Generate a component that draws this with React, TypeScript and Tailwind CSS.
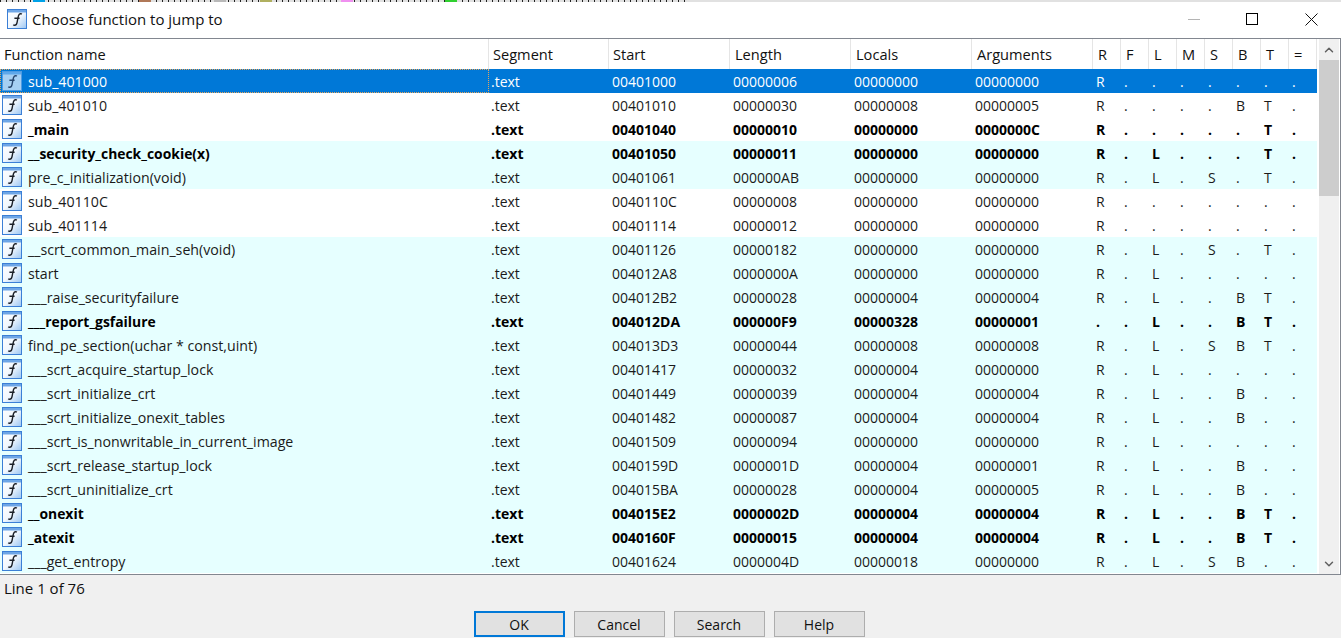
import React from "react";
import { ChevronDown, ChevronUp } from "lucide-react";

interface FuncRow {
  name: string;
  start: string;
  length: string;
  locals: string;
  args: string;
  flags: string;
  bold?: boolean;
  plain?: boolean;
}

const ZERO = "00000000";

const rows: FuncRow[] = [
  { name: "sub_401000", start: "00401000", length: "00000006", locals: ZERO, args: ZERO, flags: "R.......", plain: true },
  { name: "sub_401010", start: "00401010", length: "00000030", locals: "00000008", args: "00000005", flags: "R....BT.", plain: true },
  { name: "_main", start: "00401040", length: "00000010", locals: ZERO, args: "0000000C", flags: "R.....T.", bold: true, plain: true },
  { name: "__security_check_cookie(x)", start: "00401050", length: "00000011", locals: ZERO, args: ZERO, flags: "R.L...T.", bold: true },
  { name: "pre_c_initialization(void)", start: "00401061", length: "000000AB", locals: ZERO, args: ZERO, flags: "R.L.S.T." },
  { name: "sub_40110C", start: "0040110C", length: "00000008", locals: ZERO, args: ZERO, flags: "R.......", plain: true },
  { name: "sub_401114", start: "00401114", length: "00000012", locals: ZERO, args: ZERO, flags: "R.......", plain: true },
  { name: "__scrt_common_main_seh(void)", start: "00401126", length: "00000182", locals: ZERO, args: ZERO, flags: "R.L.S.T." },
  { name: "start", start: "004012A8", length: "0000000A", locals: ZERO, args: ZERO, flags: "R.L....." },
  { name: "___raise_securityfailure", start: "004012B2", length: "00000028", locals: "00000004", args: "00000004", flags: "R.L..BT." },
  { name: "___report_gsfailure", start: "004012DA", length: "000000F9", locals: "00000328", args: "00000001", flags: "..L..BT.", bold: true },
  { name: "find_pe_section(uchar * const,uint)", start: "004013D3", length: "00000044", locals: "00000008", args: "00000008", flags: "R.L.SBT." },
  { name: "___scrt_acquire_startup_lock", start: "00401417", length: "00000032", locals: "00000004", args: ZERO, flags: "R.L....." },
  { name: "___scrt_initialize_crt", start: "00401449", length: "00000039", locals: "00000004", args: "00000004", flags: "R.L..B.." },
  { name: "___scrt_initialize_onexit_tables", start: "00401482", length: "00000087", locals: "00000004", args: "00000004", flags: "R.L..B.." },
  { name: "___scrt_is_nonwritable_in_current_image", start: "00401509", length: "00000094", locals: ZERO, args: ZERO, flags: "R.L....." },
  { name: "___scrt_release_startup_lock", start: "0040159D", length: "0000001D", locals: "00000004", args: "00000001", flags: "R.L..B.." },
  { name: "___scrt_uninitialize_crt", start: "004015BA", length: "00000028", locals: "00000004", args: "00000005", flags: "R.L..B.." },
  { name: "__onexit", start: "004015E2", length: "0000002D", locals: "00000004", args: "00000004", flags: "R.L..BT.", bold: true },
  { name: "_atexit", start: "0040160F", length: "00000015", locals: "00000004", args: "00000004", flags: "R.L..BT.", bold: true },
  { name: "___get_entropy", start: "00401624", length: "0000004D", locals: "00000018", args: ZERO, flags: "R.L.SB.." },
];

const columns = ["Function name", "Segment", "Start", "Length", "Locals", "Arguments", "R", "F", "L", "M", "S", "B", "T", "="];

const GRID = "grid grid-cols-[489px_120px_121px_121px_121px_121px_repeat(8,28px)]";

function FunctionIcon({ selected }: { selected?: boolean }) {
  return (
    <svg width="20" height="20" viewBox="0 0 20 20" className="shrink-0">
      <defs>
        <linearGradient id="icon-fill" x1="0" y1="0" x2="1" y2="1">
          <stop offset="0" stopColor="#ffffff" />
          <stop offset="0.5" stopColor="#f2f8fe" />
          <stop offset="1" stopColor="#9cc6f2" />
        </linearGradient>
      </defs>
      <rect x="0.5" y="0.5" width="19" height="19" fill={selected ? "#a6d0f3" : "url(#icon-fill)"} stroke={selected ? "#4f9ce2" : "#3b7fd6"} />
      <rect x="1" y="1" width="18" height="2.5" fill={selected ? "#5ea8ea" : "#6ea6e6"} />
      <path
        d="M14.8 5.2c-.6-.7-1.8-.6-2.5.1-.8.8-1.1 2.2-1.4 3.8l-.8 4.2c-.3 1.6-.9 3-2.5 3-.6 0-1-.2-1.3-.5M7.4 9.2h5.2"
        fill="none"
        stroke={selected ? "#26466e" : "#1c2028"}
        strokeWidth="1.4"
      />
    </svg>
  );
}

function TopStrip() {
  return (
    <div className="flex h-[2px] bg-[#e1e1e1]">
      <div className="w-[690px] h-full bg-[repeating-linear-gradient(90deg,#222222_0,#222222_1px,#e1e1e1_1px,#e1e1e1_6px)] flex">
        <div className="ml-[33px] w-[12px] bg-[#00a2e8]" />
        <div className="ml-[94px] w-[12px] bg-[#b07858]" />
        <div className="ml-[63px] w-[12px] bg-[#b9b9b9]" />
        <div className="ml-[34px] w-[12px] bg-[#b0b060]" />
        <div className="ml-[69px] w-[12px] bg-[#f090f0]" />
        <div className="ml-[92px] w-[12px] bg-[#30d030]" />
      </div>
    </div>
  );
}

function TitleBar() {
  return (
    <div className="flex h-[36px] items-center bg-white pb-[2px] pl-[7px]">
      <FunctionIcon />
      <span className="ml-[5px] text-[15px] text-[#111111]">Choose function to jump to</span>
      <div className="ml-auto flex items-center">
        <div className="h-px w-[12px] bg-[#b4b4b4]" />
        <div className="ml-[46px] size-[12px] border border-black" />
        <svg width="13" height="13" viewBox="0 0 13 13" className="ml-[47px] mr-[23px]">
          <path d="M0.5 0.5l12 12M12.5 0.5l-12 12" stroke="#111111" strokeWidth="1" fill="none" />
        </svg>
      </div>
    </div>
  );
}

function TableHeader() {
  return (
    <div className={`${GRID} h-[30px] text-[14.6px]`}>
      {columns.map((c, i) => (
        <div key={c} className={`flex items-center border-r border-[#e5e5e5] pt-[2px] text-[#111111] ${i === 0 || i === 1 || i === 2 ? "pl-[4px]" : "pl-[5px]"}`}>
          {c}
        </div>
      ))}
    </div>
  );
}

function TableRow({ row, selected }: { row: FuncRow; selected: boolean }) {
  const bg = selected ? "bg-[#0078d7] text-white" : row.plain ? "bg-white text-[#1a1a1a]" : "bg-[#e6ffff] text-[#1a1a1a]";
  return (
    <div className={`${GRID} h-[24px] ${bg} ${row.bold ? "font-bold text-black" : ""}`}>
      <div className={`flex items-center pl-[2px] ${selected ? "outline-1 -outline-offset-1 outline-dotted outline-[#e6a65c]" : ""}`}>
        <FunctionIcon selected={selected} />
        <span className={`ml-[6px] pt-[2px] ${row.bold ? "text-[13.9px]" : "text-[14.2px]"}`}>{row.name}</span>
      </div>
      <div className="flex items-center pl-[2px]">.text</div>
      <div className="flex items-center pl-[3px]">{row.start}</div>
      <div className="flex items-center pl-[3px]">{row.length}</div>
      <div className="flex items-center pl-[3px]">{row.locals}</div>
      <div className="flex items-center pl-[3px]">{row.args}</div>
      {row.flags.split("").map((f, i) => (
        <div key={i} className="flex items-center pl-[3px]">
          {f}
        </div>
      ))}
    </div>
  );
}

function Scrollbar() {
  return (
    <div className="flex w-[20px] flex-col bg-[#f0f0f0]">
      <div className="flex h-[21px] items-center justify-center text-[#606060]">
        <ChevronUp size={14} strokeWidth={2.5} />
      </div>
      <div className="h-[136px] bg-[#cdcdcd]" />
      <div className="mt-auto flex h-[21px] items-center justify-center text-[#606060]">
        <ChevronDown size={14} strokeWidth={2.5} />
      </div>
    </div>
  );
}

function DialogButton({ label, primary }: { label: string; primary?: boolean }) {
  return (
    <button
      className={`h-[26px] w-[91px] bg-[#e1e1e1] text-[#111111] ${primary ? "border-2 border-[#0078d7]" : "border border-[#adadad]"}`}
    >
      {label}
    </button>
  );
}

export default function App() {
  return (
    <div className="flex h-[638px] w-[1341px] flex-col overflow-hidden bg-[#f0f0f0] font-['Open_Sans','Noto_Sans',sans-serif] text-[14px]">
      <TopStrip />
      <TitleBar />
      <div className="flex h-[537px] border-y border-r border-[#828790] bg-white">
        <div className="w-[1319px] pr-[2px]">
          <TableHeader />
          {rows.map((row, i) => (
            <TableRow key={row.start} row={row} selected={i === 0} />
          ))}
        </div>
        <Scrollbar />
      </div>
      <div className="flex h-[26px] items-center pl-[4px] text-[15px] text-[#111111]">Line 1 of 76</div>
      <div className="mt-[10px] flex justify-center gap-[9px] pr-[3px]">
        <DialogButton label="OK" primary />
        <DialogButton label="Cancel" />
        <DialogButton label="Search" />
        <DialogButton label="Help" />
      </div>
    </div>
  );
}
